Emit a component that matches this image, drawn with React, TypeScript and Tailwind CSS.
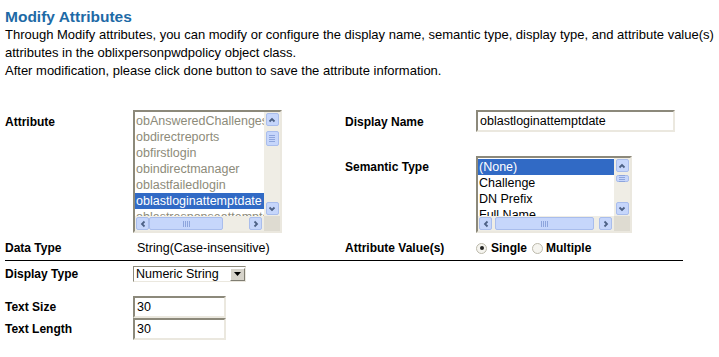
import React from 'react';

type Dir = 'up' | 'down' | 'left' | 'right';

const arrowPaths: Record<Dir, string> = {
  up: 'M1.5 5.5L4 3L6.5 5.5',
  down: 'M1.5 2.5L4 5L6.5 2.5',
  left: 'M5.5 1.5L3 4L5.5 6.5',
  right: 'M2.5 1.5L5 4L2.5 6.5',
};

const ScrollButton: React.FC<{ dir: Dir }> = ({ dir }) => (
  <div className="w-[13px] h-[13px] shrink-0 rounded-[2px] border border-[#a9bdec] bg-[#c6d6fb] flex items-center justify-center">
    <svg width="8" height="8" viewBox="0 0 8 8">
      <path d={arrowPaths[dir]} stroke="#4d6185" strokeWidth="1.8" fill="none" />
    </svg>
  </div>
);

const Grip: React.FC<{ vertical?: boolean }> = ({ vertical }) =>
  vertical ? (
    <div className="flex flex-col gap-[1px]">
      <div className="w-[6px] h-[1px] bg-[#8ea5dc]" />
      <div className="w-[6px] h-[1px] bg-[#8ea5dc]" />
      <div className="w-[6px] h-[1px] bg-[#8ea5dc]" />
      <div className="w-[6px] h-[1px] bg-[#8ea5dc]" />
    </div>
  ) : (
    <div className="flex gap-[1px]">
      <div className="w-[1px] h-[6px] bg-[#8ea5dc]" />
      <div className="w-[1px] h-[6px] bg-[#8ea5dc]" />
      <div className="w-[1px] h-[6px] bg-[#8ea5dc]" />
      <div className="w-[1px] h-[6px] bg-[#8ea5dc]" />
    </div>
  );

const inset =
  'border-2 border-t-[#8c897b] border-l-[#8c897b] border-r-[#ebe8df] border-b-[#ebe8df] bg-white';

interface ListBoxProps {
  box: string;
  items: string[];
  selected: number;
  textColor: string;
  vThumb: string;
  hThumb: string;
  hRight: string;
}

const ListBox: React.FC<ListBoxProps> = ({ box, items, selected, textColor, vThumb, hThumb, hRight }) => (
  <div className={`${box} ${inset} flex flex-col`}>
    <div className="flex flex-1 min-h-0">
      <div className="flex-1 min-w-0 overflow-hidden pt-[1px]">
        {items.map((item, i) => (
          <div
            key={item}
            className={`h-4 leading-4 px-[1px] whitespace-nowrap text-[12.5px] ${
              i === selected ? 'bg-[#316ac5] text-white' : textColor
            }`}
          >
            {item}
          </div>
        ))}
      </div>
      <div className="w-4 flex flex-col items-center py-[1px] bg-[#efede5]">
        <ScrollButton dir="up" />
        <div className={`${vThumb} w-[13px] rounded-[2px] border border-[#a9bdec] bg-[#c6d6fb] flex items-center justify-center`}>
          <Grip vertical />
        </div>
        <div className="flex-1" />
        <ScrollButton dir="down" />
      </div>
    </div>
    <div className="flex h-[15px]">
      <div className="flex-1 flex items-center pl-[1px] bg-[#efede5]">
        <ScrollButton dir="left" />
        <div className={`${hThumb} h-[13px] rounded-[2px] border border-[#a9bdec] bg-[#c6d6fb] flex items-center justify-center`}>
          <Grip />
        </div>
        <div className="flex-1" />
        <div className={hRight}>
          <ScrollButton dir="right" />
        </div>
      </div>
      <div className="w-4 bg-[#dedbd1]" />
    </div>
  </div>
);

const Label: React.FC<{ children: React.ReactNode; className?: string }> = ({ children, className }) => (
  <div className={`font-bold text-[12px] leading-4 ${className ?? ''}`}>{children}</div>
);

const Radio: React.FC<{ checked?: boolean }> = ({ checked }) => (
  <span className="w-[11px] h-[11px] rounded-full border border-[#bcb9ab] bg-[#f5f4ef] flex items-center justify-center">
    {checked && <span className="w-[4px] h-[4px] rounded-full bg-[#222]" />}
  </span>
);

export default function App() {
  const attributes = [
    'obAnsweredChallenges',
    'obdirectreports',
    'obfirstlogin',
    'obindirectmanager',
    'oblastfailedlogin',
    'oblastloginattemptdate',
    'oblastresponseattemptdate',
  ];
  const semanticTypes = ['(None)', 'Challenge', 'DN Prefix', 'Full Name', 'Login'];

  return (
    <div className="w-[719px] h-[357px] bg-white text-black font-['Liberation_Sans',Arial,sans-serif] px-[5px] overflow-hidden">
      <div className="pt-[7px] leading-[19px] text-[15.5px] font-bold text-[#1d6aa6]">Modify Attributes</div>
      <div className="text-[13px] leading-[18px] whitespace-nowrap">
        <div>
          Through Modify attributes, you can modify or configure the display name, semantic type, display type, and attribute value(s)
        </div>
        <div>attributes in the oblixpersonpwdpolicy object class.</div>
        <div>After modification, please click done button to save the attribute information.</div>
      </div>

      <div className="flex mt-[30px] h-[123px]">
        <Label className="w-[128px] pt-1">Attribute</Label>
        <div className="w-[212px]">
          <ListBox
            box="w-[149px] h-[123px]"
            items={attributes}
            selected={5}
            textColor="text-[#8d8b7a]"
            vThumb="mt-[5px] h-[15px]"
            hThumb="w-[74px]"
            hRight="pr-[2px]"
          />
        </div>
        <div className="flex flex-col">
          <div className="flex h-[22px]">
            <Label className="w-[131px] pt-1">Display Name</Label>
            <div className={`w-[199px] h-[22px] ${inset} flex items-center px-[2px] text-[12.5px]`}>
              oblastloginattemptdate
            </div>
          </div>
          <div className="flex mt-[24px]">
            <Label className="w-[131px] pt-[3px]">Semantic Type</Label>
            <ListBox
              box="w-[156px] h-[77px]"
              items={semanticTypes}
              selected={0}
              textColor="text-black"
              vThumb="mt-[3px] h-[7px]"
              hThumb="ml-[3px] w-[99px]"
              hRight="pr-[2px]"
            />
          </div>
        </div>
      </div>

      <div className="flex items-center mt-[6px] h-[18px]">
        <Label className="w-[128px]">Data Type</Label>
        <div className="w-[212px] pl-1 text-[12.5px]">String(Case-insensitive)</div>
        <Label className="w-[131px]">Attribute Value(s)</Label>
        <div className="flex items-center font-bold text-[12px]">
          <Radio checked />
          <span className="ml-[4px]">Single</span>
          <span className="ml-[5px]">
            <Radio />
          </span>
          <span className="ml-[3px]">Multiple</span>
        </div>
      </div>

      <div className="mt-[3px] w-[678px] h-[1px] bg-black" />

      <div className="flex items-center mt-[5px] h-4">
        <Label className="w-[128px]">Display Type</Label>
        <div className={`w-[113px] h-4 ${inset} border-[1.5px] flex items-center text-[12.5px]`}>
          <span className="flex-1 pl-[2px] leading-none">Numeric String</span>
          <div className="w-[15px] h-[13px] bg-[#d6d3ca] border border-t-white border-l-white border-r-[#7f7d72] border-b-[#7f7d72] flex items-center justify-center">
            <svg width="7" height="4" viewBox="0 0 7 4">
              <path d="M0 0H7L3.5 4Z" fill="#000" />
            </svg>
          </div>
        </div>
      </div>

      <div className="flex items-center mt-[14px] h-[22px]">
        <Label className="w-[128px]">Text Size</Label>
        <div className={`w-[93px] h-[22px] ${inset} flex items-center px-[2px] text-[12.5px]`}>30</div>
      </div>
      <div className="flex items-center h-[22px]">
        <Label className="w-[128px]">Text Length</Label>
        <div className={`w-[93px] h-[22px] ${inset} flex items-center px-[2px] text-[12.5px]`}>30</div>
      </div>
    </div>
  );
}
